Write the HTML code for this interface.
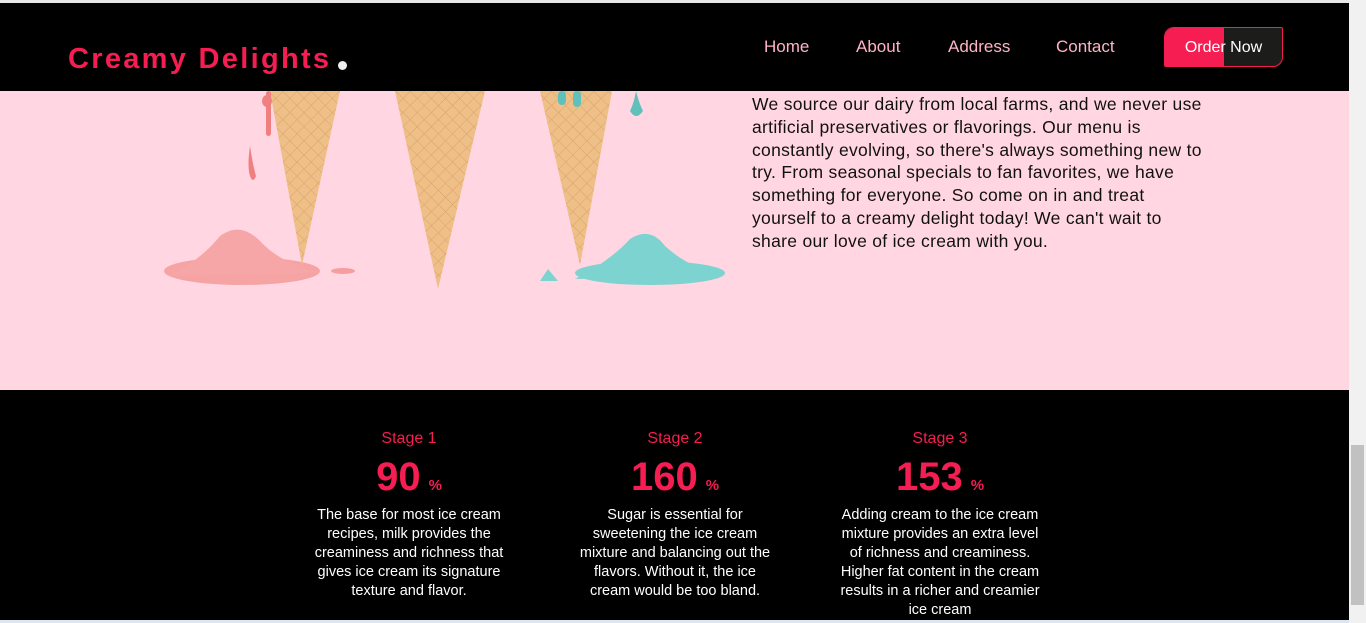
<!DOCTYPE html>
<html><head><meta charset="utf-8"><style>
*{margin:0;padding:0;box-sizing:border-box}
body{width:1366px;height:623px;overflow:hidden;background:#fff;font-family:"Liberation Sans",sans-serif;position:relative}
.top{position:absolute;left:0;top:0;width:1349px;height:3px;background:#e8e8e8}
header{position:absolute;left:0;top:3px;width:1349px;height:88px;background:#000}
.logo{position:absolute;left:68px;top:40px;color:#f51d52;font-size:29px;font-weight:bold;letter-spacing:2.3px}
.dot{position:absolute;left:338px;top:58px;width:9px;height:9px;border-radius:50%;background:#eee}
nav a{position:absolute;top:34px;color:#ffb3c6;font-size:17px;text-decoration:none}
.btn{position:absolute;left:1164px;top:24px;width:119px;height:40px;border:1px solid #f51d52;border-radius:10px 2px 10px 2px;overflow:hidden;background:#1c1c1a}
.btn i{position:absolute;left:0;top:0;width:59px;height:100%;background:#f51d52}
.btn span{position:absolute;left:0;width:100%;top:11px;text-align:center;color:#fff;font-size:16px}
.pink{position:absolute;left:0;top:91px;width:1349px;height:299px;background:#ffd6e2}
.para{position:absolute;left:752px;top:2px;font-size:17.5px;line-height:22.8px;color:#111;white-space:nowrap;letter-spacing:0.3px}
.dark{position:absolute;left:0;top:390px;width:1349px;height:230px;background:#000}
.st{position:absolute;top:40px;width:240px;text-align:center}
.st h4{color:#f51d52;font-weight:normal;font-size:16px;height:22px}
.st b{display:block;color:#f51d52;font-size:40px;line-height:50px;height:54px}
.st b small{font-size:15px;margin-left:8px}
.st p{color:#fff;font-size:14.5px;line-height:19px;white-space:nowrap}
.sb{position:absolute;left:1349px;top:0;width:17px;height:623px;background:#f1f1f1}
.thumb{position:absolute;left:1351px;top:445px;width:13px;height:160px;background:#c1c1c1}
.bot{position:absolute;left:0;top:620px;width:1349px;height:3px;background:#dde6f0}
</style></head><body>
<div class="top"></div>
<div class="pink">
<svg width="760" height="299" style="position:absolute;left:0;top:0">
<defs><pattern id="w" width="10" height="10" patternUnits="userSpaceOnUse" patternTransform="rotate(45)"><rect width="10" height="10" fill="#efbf88"/><path d="M0 0H10M0 0V10" stroke="#d9a268" stroke-width="1"/></pattern></defs>
<ellipse cx="242" cy="180" rx="78" ry="14" fill="#f5a3a3"/>
<path d="M168 185 Q200 170 220 145 Q240 130 260 150 Q280 172 320 182 Z" fill="#f7a6a7"/>
<ellipse cx="343" cy="180" rx="12" ry="3" fill="#f59e9e"/>
<ellipse cx="650" cy="182" rx="75" ry="12" fill="#7dd3cf"/>
<path d="M575 188 Q610 170 630 148 Q650 135 665 155 Q690 178 725 184 Z" fill="#7dd3cf"/>
<path d="M540 190 L548 178 L558 190 Z" fill="#7dd3cf"/>
<path d="M270 0 L340 0 L302 174 Z" fill="url(#w)"/>
<path d="M395 0 L485 0 L438 198 Z" fill="url(#w)"/>
<path d="M540 0 L612 0 L580 174 Z" fill="url(#w)"/>
<path d="M250 55 Q253 75 256 85 Q253 93 250 85 Q247 75 250 55Z" fill="#f07f80"/>
<rect x="266" y="0" width="5" height="45" rx="2.5" fill="#f07f80"/>
<ellipse cx="267" cy="10" rx="5" ry="6" fill="#f07f80"/>
<path d="M636 0 Q634 12 630 20 Q636 30 643 20 Q639 12 636 0Z" fill="#60c0bc"/>
<rect x="558" y="0" width="8" height="14" rx="4" fill="#60c0bc"/>
<rect x="573" y="0" width="8" height="16" rx="4" fill="#60c0bc"/>
</svg>
<div class="para">We source our dairy from local farms, and we never use<br>artificial preservatives or flavorings. Our menu is<br>constantly evolving, so there's always something new to<br>try. From seasonal specials to fan favorites, we have<br>something for everyone. So come on in and treat<br>yourself to a creamy delight today! We can't wait to<br>share our love of ice cream with you.</div>
</div>
<header>
<div class="logo">Creamy Delights</div>
<div class="dot"></div>
<nav><a style="left:764px">Home</a><a style="left:856px">About</a><a style="left:948px">Address</a><a style="left:1056px">Contact</a></nav>
<div class="btn"><i></i><span>Order Now</span></div>
</header>
<div class="dark">
<div class="st" style="left:289px"><h4>Stage 1</h4><b>90<small>%</small></b><p>The base for most ice cream<br>recipes, milk provides the<br>creaminess and richness that<br>gives ice cream its signature<br>texture and flavor.</p></div>
<div class="st" style="left:555px"><h4>Stage 2</h4><b>160<small>%</small></b><p>Sugar is essential for<br>sweetening the ice cream<br>mixture and balancing out the<br>flavors. Without it, the ice<br>cream would be too bland.</p></div>
<div class="st" style="left:820px"><h4>Stage 3</h4><b>153<small>%</small></b><p>Adding cream to the ice cream<br>mixture provides an extra level<br>of richness and creaminess.<br>Higher fat content in the cream<br>results in a richer and creamier<br>ice cream</p></div>
</div>
<div class="bot"></div>
<div class="sb"></div><div class="thumb"></div>
</body></html>
